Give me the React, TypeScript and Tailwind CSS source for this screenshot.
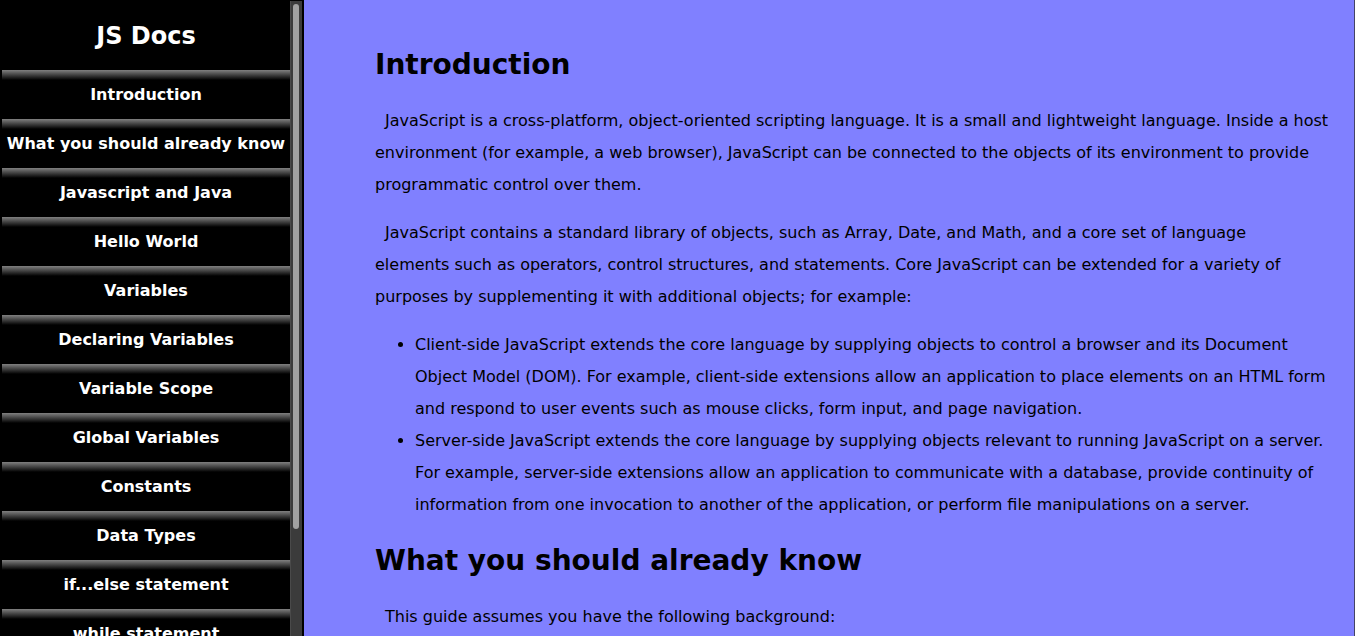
const sections = [
  'Introduction',
  'What you should already know',
  'Javascript and Java',
  'Hello World',
  'Variables',
  'Declaring Variables',
  'Variable Scope',
  'Global Variables',
  'Constants',
  'Data Types',
  'if...else statement',
  'while statement',
];

const anchor = (title: string) => title.replace(/ /g, '_');

function Sidebar() {
  return (
    <nav aria-label="JS Docs" className="flex w-76 shrink-0 bg-black pr-0.5 pl-0.5 pt-px text-white">
      <div className="min-w-0 flex-1 overflow-hidden text-center font-bold">
        <h1 className="flex h-[69px] items-center justify-center text-2xl">JS Docs</h1>
        <ul>
          {sections.map((title) => (
            <li key={title}>
              <a
                href={`#${anchor(title)}`}
                className="flex h-[49px] items-center justify-center whitespace-nowrap bg-[linear-gradient(to_bottom,#808080,#000_10px)] text-base"
              >
                {title}
              </a>
            </li>
          ))}
        </ul>
      </div>
      <div aria-hidden="true" className="w-3 shrink-0 border-l border-[#4a4a4a] bg-[#3b3b3b] pt-[3px] pr-[3px] pl-0.5">
        <div className="h-[83%] rounded-full bg-[#a1a1a1]" />
      </div>
    </nav>
  );
}

function Heading({ children }: { children: string }) {
  return (
    <h2 id={anchor(children)} className="my-6 text-[28px] leading-8 font-bold">
      {children}
    </h2>
  );
}

function Paragraph({ children }: { children: string }) {
  return <p className="my-4 indent-[10px]">{children}</p>;
}

export default function App() {
  return (
    <div className="flex h-screen overflow-hidden bg-black font-['DejaVu_Sans',sans-serif]">
      <Sidebar />
      <main className="min-w-0 flex-1 overflow-hidden border-r border-[#444466] bg-[#8080ff] pt-[25px] pr-6 pl-[71px] text-base leading-8 text-black">
        <section>
          <Heading>Introduction</Heading>
          <Paragraph>
            JavaScript is a cross-platform, object-oriented scripting language. It is a small and lightweight language. Inside a host environment (for example, a web browser), JavaScript can be connected to the objects of its environment to provide programmatic control over them.
          </Paragraph>
          <Paragraph>
            JavaScript contains a standard library of objects, such as Array, Date, and Math, and a core set of language elements&nbsp;such as operators, control structures, and statements. Core JavaScript can be extended for a variety of purposes by supplementing it with additional objects; for example:
          </Paragraph>
          <ul className="my-4 list-disc pl-10">
            <li>
              Client-side JavaScript extends the core language by supplying objects to control a browser and its Document Object Model (DOM). For example, client-side extensions allow an application to place elements on an HTML form and respond to user events such as mouse clicks, form input, and page navigation.
            </li>
            <li>
              Server-side JavaScript extends the core language by supplying objects relevant to running JavaScript on a server. For example, server-side extensions allow an application to communicate with a database, provide continuity of information from one invocation to another of the application, or perform file manipulations on a server.
            </li>
          </ul>
        </section>
        <section>
          <Heading>What you should already know</Heading>
          <Paragraph>This guide assumes you have the following background:</Paragraph>
        </section>
      </main>
    </div>
  );
}
